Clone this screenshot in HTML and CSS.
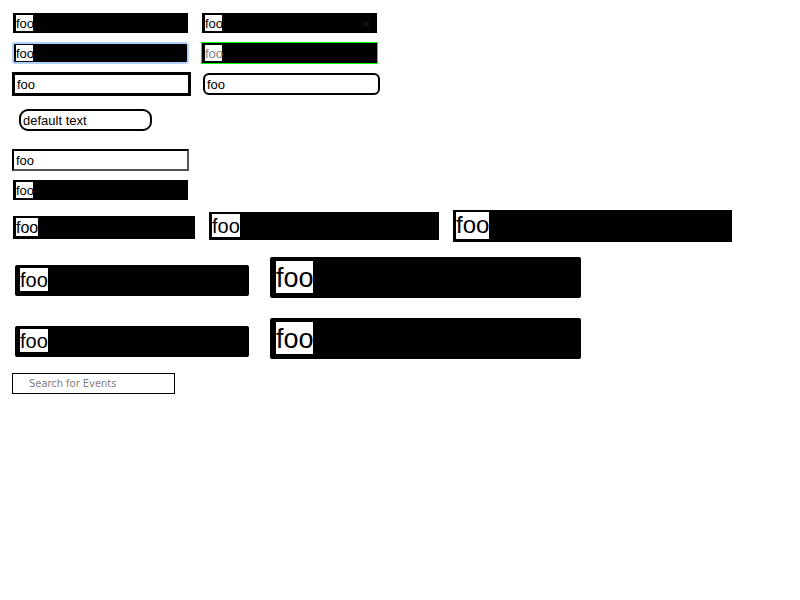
FILE: index.html
```html
<!DOCTYPE html>
<html lang="en">
<head>
<meta charset="utf-8">
<title>Text fields</title>
<link rel="stylesheet" href="styles.css">
</head>
<body>
<form class="fields">
  <div class="row">
    <input class="field dark" type="text" value="foo" aria-label="Text">
    <div class="clearable">
      <input class="field dark" type="text" value="foo" aria-label="Search text">
      <svg class="cross" viewBox="0 0 8 8" aria-hidden="true"><path d="M1 1 7 7M7 1 1 7"/></svg>
    </div>
  </div>
  <div class="row">
    <input class="field dark focused" type="text" value="foo" aria-label="Focused text">
    <input class="field dark green" type="text" placeholder="foo" aria-label="Text with placeholder">
  </div>
  <div class="row">
    <input class="field thick" type="text" value="foo" aria-label="Thick border">
    <input class="field rounded" type="text" value="foo" aria-label="Rounded border">
  </div>
  <div class="row row-pill">
    <input class="field pill" type="text" value="default text" aria-label="Default text">
  </div>
  <div class="row row-inset">
    <input class="field inset" type="text" value="foo" aria-label="Inset border">
  </div>
  <div class="row">
    <input class="field dark" type="text" value="foo" aria-label="Plain text">
  </div>
  <div class="row row-sizes">
    <input class="field dark medium" type="text" value="foo" aria-label="Medium text">
    <input class="field dark large" type="text" value="foo" aria-label="Large text">
    <input class="field dark huge" type="text" value="foo" aria-label="Extra large text">
  </div>
  <div class="row row-soft">
    <input class="field dark large soft" type="text" value="foo" aria-label="Soft large text">
    <input class="field dark giant soft" type="text" value="foo" aria-label="Soft giant text">
  </div>
  <div class="row row-soft row-soft-next">
    <input class="field dark large soft" type="text" value="foo" aria-label="Second soft large text">
    <input class="field dark giant soft" type="text" value="foo" aria-label="Second soft giant text">
  </div>
  <div class="row row-search">
    <input class="field search" type="text" placeholder="Search for Events" aria-label="Search for Events">
  </div>
</form>
</body>
</html>
```
FILE: styles.css
```css
* {
  box-sizing: border-box;
}

body {
  margin: 0;
  padding: 12px;
  background: #fff;
  font-family: "Liberation Sans", Arial, sans-serif;
}

.row {
  display: flex;
  align-items: center;
  gap: 12px;
  margin-bottom: 8px;
}

.field {
  display: block;
  width: 177px;
  margin: 0;
  padding: 2px 2px 0;
  border: 2px solid #000;
  background: #fff;
  color: #000;
  font-family: inherit;
  font-size: 13px;
  line-height: 16px;
  outline: 0;
}

.field::placeholder {
  color: #808080;
  opacity: 1;
}

/* Dark fields keep a white patch behind their text. */
.dark {
  --patch-width: 17px;
  --patch-height: 16px;
  --patch-x: 3px;
  --patch-y: 2px;
  width: 175px;
  margin: 1px;
  padding: 3px 3px 1px;
  border: 0;
  background: #000 linear-gradient(#fff, #fff) var(--patch-x) var(--patch-y) / var(--patch-width) var(--patch-height) no-repeat;
}

.clearable {
  position: relative;
}

.cross {
  position: absolute;
  top: 8px;
  right: 8px;
  width: 8px;
  height: 8px;
  fill: none;
  stroke: #111;
  stroke-width: 2;
}

.focused {
  --patch-x: 2px;
  --patch-y: 1px;
  width: 177px;
  margin: 0;
  padding: 2px 2px 0;
  border: 2px solid #b0d0ff;
  border-radius: 3px;
}

.green {
  width: 177px;
  margin: 0;
  border: 1px solid #0f0;
}

.thick {
  width: 179px;
  border-width: 3px;
}

.rounded {
  border-radius: 6px;
}

.row-pill {
  margin: 13px 0 18px 7px;
}

.pill {
  width: 133px;
  border-radius: 9px;
}

.inset {
  border-color: #000 #555 #555 #000;
}

.row-sizes {
  align-items: baseline;
  margin-bottom: 13px;
}

.medium {
  --patch-width: 22px;
  --patch-height: 18px;
  width: 182px;
  padding: 3px 3px 2px;
  font-size: 16px;
  line-height: 18px;
}

.large {
  --patch-width: 28px;
  --patch-height: 23px;
  width: 230px;
  padding: 3px 3px 2px;
  font-size: 20px;
  line-height: 23px;
}

.huge {
  --patch-width: 33px;
  --patch-height: 27px;
  width: 279px;
  padding: 1px 3px 4px;
  font-size: 24px;
  line-height: 27px;
}

.giant {
  --patch-width: 37px;
  --patch-height: 32px;
  width: 311px;
  font-size: 27px;
  line-height: 32px;
}

.row-soft {
  align-items: baseline;
  gap: 19px;
  margin: 0 0 18px 2px;
}

.row-soft-next {
  margin-bottom: 13px;
}

.soft {
  padding: 5px 5px 4px;
  border-radius: 2px;
}

.large.soft {
  --patch-x: 5px;
  --patch-y: 3px;
  width: 234px;
  padding-top: 4px;
}

.giant.soft {
  --patch-x: 6px;
  --patch-y: 4px;
  padding-left: 6px;
}

.search {
  width: 163px;
  padding: 0 16px;
  border-width: 1px;
  font-family: "DejaVu Sans Condensed", "Open Sans", sans-serif;
  font-size: 11px;
  line-height: 19px;
}
```
